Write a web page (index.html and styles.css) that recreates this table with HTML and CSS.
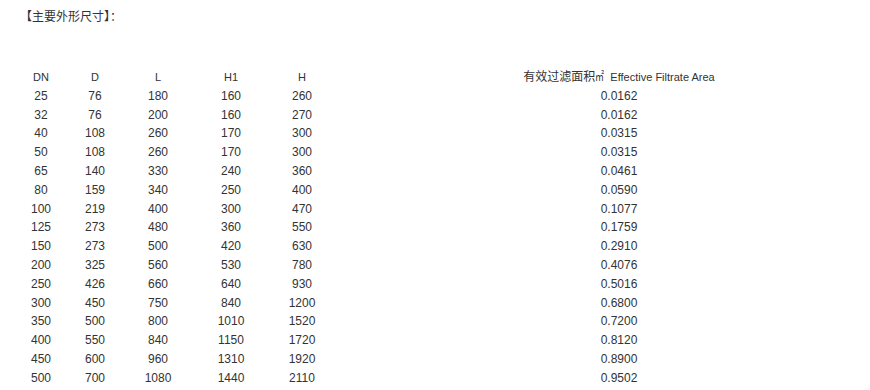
FILE: index.html
```html
<!DOCTYPE html>
<html lang="zh">
<head>
<meta charset="utf-8">
<link rel="stylesheet" href="styles.css">
</head>
<body>
<div class="page">
  <p class="title">【主要外形尺寸】：</p>
  <table class="spec">
    <colgroup>
      <col class="c-dn"><col class="c-d"><col class="c-l"><col class="c-h1"><col class="c-h"><col class="c-gap"><col class="c-area">
    </colgroup>
    <thead>
      <tr><td>DN</td><td>D</td><td>L</td><td>H1</td><td>H</td><td></td><td><span class="cjk">有效过滤面积</span><span class="unit">㎡</span> Effective Filtrate Area</td></tr>
    </thead>
    <tbody>
      <tr><td>25</td><td>76</td><td>180</td><td>160</td><td>260</td><td></td><td>0.0162</td></tr>
      <tr><td>32</td><td>76</td><td>200</td><td>160</td><td>270</td><td></td><td>0.0162</td></tr>
      <tr><td>40</td><td>108</td><td>260</td><td>170</td><td>300</td><td></td><td>0.0315</td></tr>
      <tr><td>50</td><td>108</td><td>260</td><td>170</td><td>300</td><td></td><td>0.0315</td></tr>
      <tr><td>65</td><td>140</td><td>330</td><td>240</td><td>360</td><td></td><td>0.0461</td></tr>
      <tr><td>80</td><td>159</td><td>340</td><td>250</td><td>400</td><td></td><td>0.0590</td></tr>
      <tr><td>100</td><td>219</td><td>400</td><td>300</td><td>470</td><td></td><td>0.1077</td></tr>
      <tr><td>125</td><td>273</td><td>480</td><td>360</td><td>550</td><td></td><td>0.1759</td></tr>
      <tr><td>150</td><td>273</td><td>500</td><td>420</td><td>630</td><td></td><td>0.2910</td></tr>
      <tr><td>200</td><td>325</td><td>560</td><td>530</td><td>780</td><td></td><td>0.4076</td></tr>
      <tr><td>250</td><td>426</td><td>660</td><td>640</td><td>930</td><td></td><td>0.5016</td></tr>
      <tr><td>300</td><td>450</td><td>750</td><td>840</td><td>1200</td><td></td><td>0.6800</td></tr>
      <tr><td>350</td><td>500</td><td>800</td><td>1010</td><td>1520</td><td></td><td>0.7200</td></tr>
      <tr><td>400</td><td>550</td><td>840</td><td>1150</td><td>1720</td><td></td><td>0.8120</td></tr>
      <tr><td>450</td><td>600</td><td>960</td><td>1310</td><td>1920</td><td></td><td>0.8900</td></tr>
      <tr><td>500</td><td>700</td><td>1080</td><td>1440</td><td>2110</td><td></td><td>0.9502</td></tr>
    </tbody>
  </table>
</div>
</body>
</html>
```
FILE: styles.css
```css
html, body {
  margin: 0;
  padding: 0;
  background: #ffffff;
}
body {
  font-family: "Liberation Sans", Arial, "Noto Sans CJK SC", sans-serif;
  font-size: 12px;
  color: #333333;
}
.page {
  padding: 8px 0 0 20px;
}
.title {
  margin: 0;
  line-height: 18px;
  height: 18px;
}
.spec {
  margin-top: 42px;
  margin-left: -2px;
  border-collapse: collapse;
  table-layout: fixed;
  width: 698px;
}
.spec td {
  padding: 0;
  height: 18.8px;
  line-height: 18.8px;
  text-align: center;
  white-space: nowrap;
}
.spec thead td {
  font-size: 11px;
}
.spec .cjk {
  font-size: 12px;
}
.spec .unit {
  display: inline-block;
  width: 10px;
  margin-right: 2px;
  font-size: 12px;
  transform: scaleX(0.75);
  transform-origin: left center;
}
.c-dn { width: 46px; }
.c-d { width: 62px; }
.c-l { width: 64px; }
.c-h1 { width: 82px; }
.c-h { width: 60px; }
.c-gap { width: 190px; }
.c-area { width: 194px; }
```
